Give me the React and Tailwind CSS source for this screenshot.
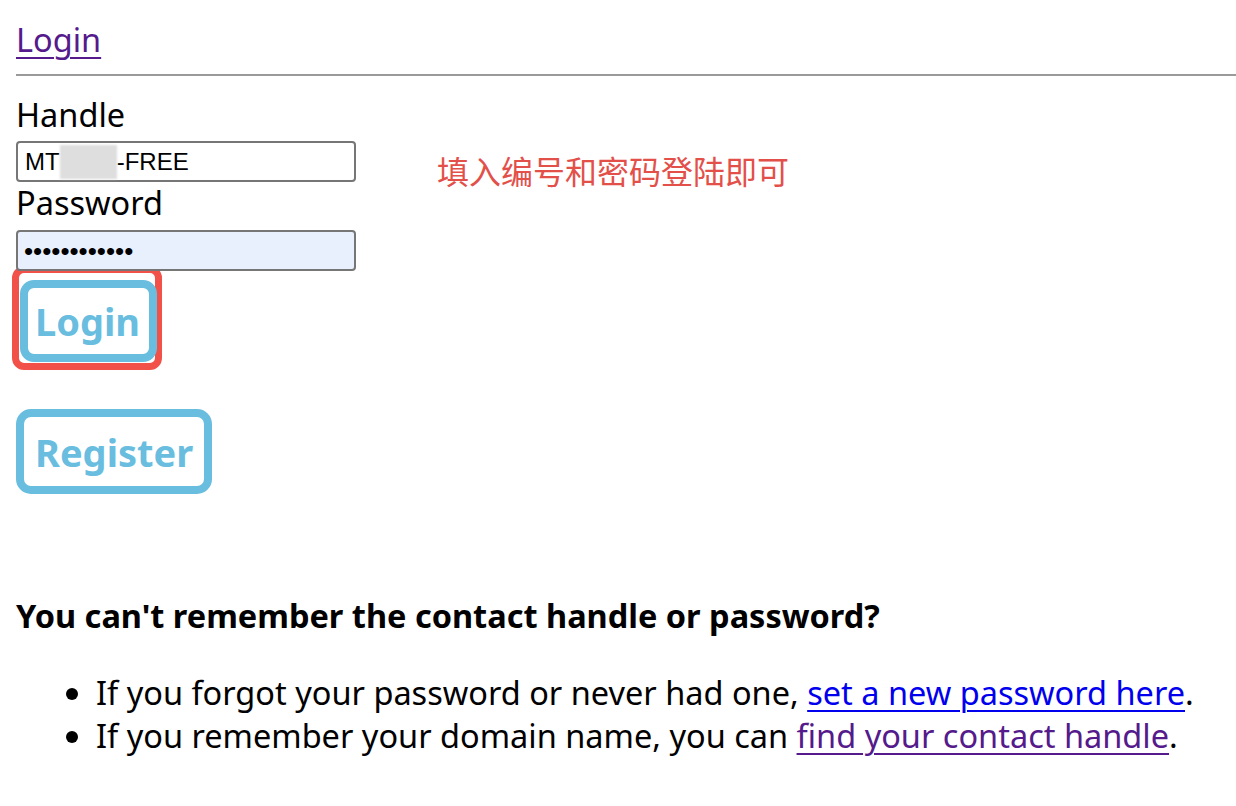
import React from 'react';

function App() {
  return (
    <div className="min-h-[806px] bg-white pl-[16px] font-['Noto_Sans','Open_Sans',sans-serif] text-[32.5px] leading-[42px] text-black">
      <div className="pt-[19px]">
        <a href="#" className="text-[#551a8b] underline decoration-[2px] underline-offset-[5px]">Login</a>
      </div>
      <hr className="mt-[13px] border-0 border-t-2 border-[#9a9a9a]" />

      <div className="mt-[18px] flex">
        <div className="w-[340px] shrink-0">
          <div className="h-[42px]">Handle</div>
          <div className="mt-[5px] flex h-[41px] w-[340px] items-center rounded-[4px] border-2 border-[#767676] bg-white px-[7px] font-['Liberation_Sans',sans-serif] text-[24px] leading-[30px]">
            <span>MT</span>
            <span className="h-[34px] w-[57px] bg-[#dedede] blur-[1px]"></span>
            <span>-FREE</span>
          </div>
          <div className="h-[42px]">Password</div>
          <div className="mt-[6px] flex h-[41px] w-[340px] items-center rounded-[4px] border-2 border-[#767676] bg-[#e8f0fe] px-[6px] font-['Liberation_Sans',sans-serif] text-[26px] leading-[30px]">
            ••••••••••••
          </div>
        </div>
        <div className="ml-[81px] mt-[55px] font-['Noto_Sans_CJK_SC',sans-serif] text-[32px] leading-[42px] text-[#e3504a]">
          填入编号和密码登陆即可
        </div>
      </div>

      <div className="-ml-[4px] -mt-[5px] h-[104px] w-[150px] rounded-[12px] border-[7px] border-[#f2514a] pl-[1px] pt-[7px]">
        <button className="h-[82px] rounded-[14px] border-[8px] border-[#69bddf] bg-white pl-[7px] pr-[9px] font-['Noto_Sans',sans-serif] text-[38px] font-bold leading-[50px] text-[#69bddf]">
          Login
        </button>
      </div>

      <div className="mt-[39px]">
        <button className="h-[85px] rounded-[15px] border-[8px] border-[#69bddf] bg-white px-[11px] font-['Noto_Sans',sans-serif] text-[38px] font-bold leading-[50px] text-[#69bddf]">
          Register
        </button>
      </div>

      <h3 className="mt-[101px] text-[32.5px] font-bold leading-[42px]">
        You can't remember the contact handle or password?
      </h3>
      <ul className="mt-[34px] list-disc pl-[80px] leading-[43px]">
        <li>
          If you forgot your password or never had one,{' '}
          <a href="#" className="text-[#0000ee] underline decoration-[2px] underline-offset-[5px]">set a new password here</a>.
        </li>
        <li>
          If you remember your domain name, you can{' '}
          <a href="#" className="text-[#551a8b] underline decoration-[2px] underline-offset-[5px]">find your contact handle</a>.
        </li>
      </ul>
    </div>
  );
}

export default App;
